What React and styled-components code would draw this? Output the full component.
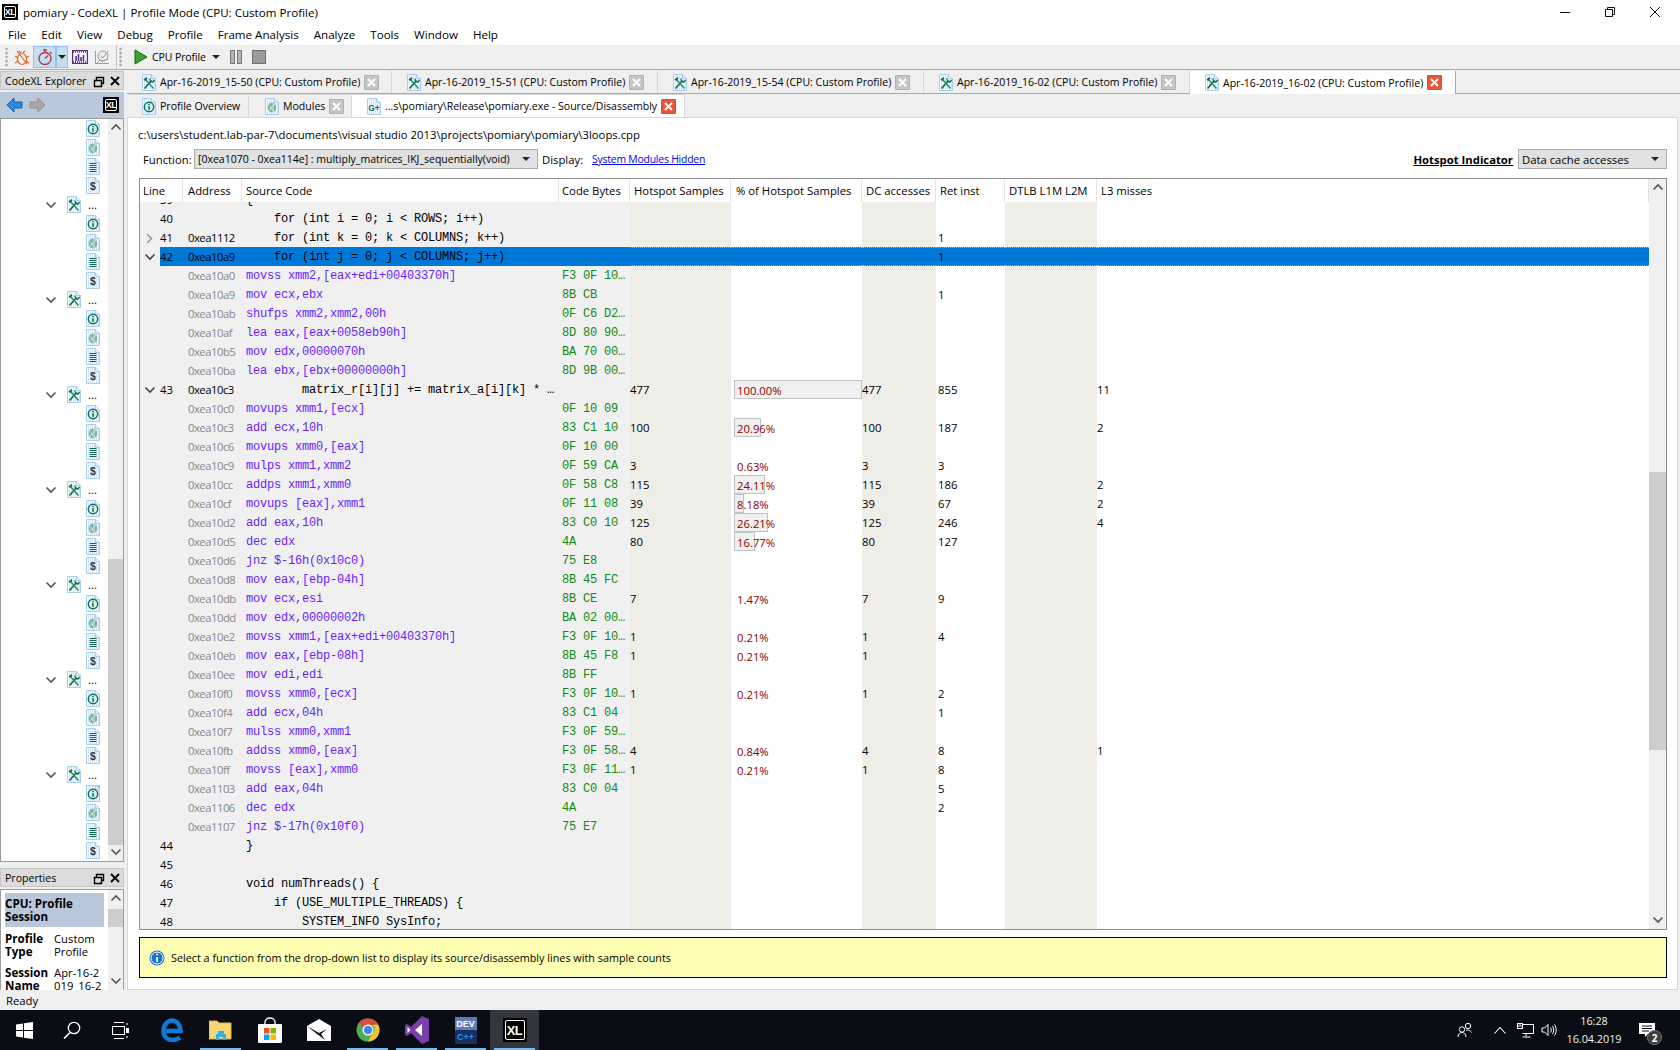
import React from 'react';
import styled, { createGlobalStyle } from 'styled-components';

const UI = '"Open Sans", "Liberation Sans", sans-serif';
const MONO = '"Liberation Mono", monospace';

const Global = createGlobalStyle`
    html, body { margin: 0; padding: 0; overflow: hidden; background: #efefef; }
    * { box-sizing: border-box; }
`;

const Page = styled.div`
    width: 1680px;
    height: 1050px;
    display: flex;
    flex-direction: column;
    font-family: ${UI};
    font-size: 11.3px;
    color: #000;
    background: #efefef;
    overflow: hidden;
`;

/* title + menu */
const TitleBar = styled.div`
    height: 24px;
    flex: none;
    background: #fff;
    display: flex;
    align-items: center;
    padding: 0 3px 0 2px;
`;
const TitleText = styled.span`
    margin-left: 5px;
    font-size: 11.6px;
    flex: 1;
`;
const WinButton = styled.div`
    width: 45px;
    height: 20px;
    display: flex;
    align-items: center;
    justify-content: center;
`;
const MenuBar = styled.div`
    height: 20px;
    flex: none;
    background: #fff;
    display: flex;
    align-items: center;
    gap: 15px;
    padding-left: 8px;
    font-size: 11.6px;
`;
const MenuItem = styled.span``;

const LogoBox = styled.div`
    width: ${({$size}) => $size}px;
    height: ${({$size}) => $size}px;
    flex: none;
    background: #000;
    display: flex;
    align-items: center;
    justify-content: center;
    padding: ${({$size}) => Math.round($size / 10)}px;
`;
const LogoInner = styled.div`
    width: 100%;
    height: 100%;
    border: 1px solid #fff;
    border-radius: 2px;
    color: #fff;
    font: bold ${({$size}) => Math.round($size * 0.56)}px "Liberation Sans", sans-serif;
    display: flex;
    align-items: center;
    justify-content: center;
    letter-spacing: -0.5px;
`;
const XLLogo = ({size}) => <LogoBox $size={size}><LogoInner $size={size}>XL</LogoInner></LogoBox>;

/* toolbar */
const Toolbar = styled.div`
    height: 26px;
    flex: none;
    display: flex;
    align-items: center;
    padding-left: 5px;
    background: #f0f0f0;
    border-top: 1px solid #fafafa;
    border-bottom: 1px solid #a9a9a9;
`;
const Grip = styled.div`
    width: 3px;
    height: 20px;
    margin: 0 2px 0 ${({$left}) => $left || 0}px;
    background-image: radial-gradient(#a8a8a8 1px, transparent 1.2px);
    background-size: 3px 4px;
`;
const ToolSep = styled.div`
    width: 1px;
    height: 24px;
    margin-left: 2px;
    background: #c4c4c4;
`;
const ToolBtn = styled.div`
    width: ${({$w}) => $w || 23}px;
    height: 22px;
    flex: none;
    margin-left: ${({$left}) => $left || 0}px;
    display: flex;
    align-items: center;
    justify-content: center;
    background: ${({$on}) => $on ? '#c4def2' : 'transparent'};
    border: 1px solid ${({$on}) => $on ? '#92c0e6' : 'transparent'};
`;
const ToolLabel = styled.span`
    width: 55px;
    margin-left: 1px;
    font-size: 10.5px;
    letter-spacing: -0.1px;
    white-space: nowrap;
`;
const Caret = styled.span`
    width: 0;
    height: 0;
    flex: none;
    border-left: 4px solid transparent;
    border-right: 4px solid transparent;
    border-top: 4px solid #222;
`;

/* workspace */
const Workspace = styled.div`
    flex: 1;
    min-height: 0;
    display: flex;
    padding-top: 1px;
`;
const Dock = styled.div`
    width: 124px;
    flex: none;
    display: flex;
    flex-direction: column;
`;
const DockHeader = styled.div`
    height: 19px;
    flex: none;
    display: flex;
    align-items: center;
    padding: 1px 2px 0 4px;
    background: #dcdcdc;
    border: 1px solid #c4c4c4;
    font-size: 10.6px;
    margin-top: ${({$top}) => $top || 0}px;
`;
const DockTitle = styled.span`
    flex: 1;
    white-space: nowrap;
`;
const NavBar = styled.div`
    height: 26px;
    flex: none;
    margin-top: 2px;
    background: #b9c8db;
    display: flex;
    align-items: center;
    padding: 0 5px 0 6px;
    gap: 6px;
`;
const NavSpacer = styled.div`flex: 1;`;
const Tree = styled.div`
    flex: 1;
    min-height: 0;
    display: flex;
    background: #fff;
    border: 1px solid #9c9c9c;
`;
const TreeList = styled.div`
    flex: 1;
    overflow: hidden;
`;
const TreeRow = styled.div`
    height: 19px;
    display: flex;
    align-items: center;
    padding-left: ${({$group}) => $group ? 44 : 85}px;
`;
const TreeGap = styled.span`
    width: 10px;
    flex: none;
`;
const TreeDots = styled.span`
    margin-left: 7px;
    font-size: 11.3px;
    line-height: 12px;
`;
const SelectedIcon = styled.span`
    display: flex;
    background: ${({$on}) => $on ? '#9fc4e6' : 'transparent'};
`;

const Scroll = styled.div`
    width: ${({$w}) => $w || 16}px;
    flex: none;
    display: flex;
    flex-direction: column;
    background: #f0f0f0;
`;
const ScrollArrow = styled.div`
    height: 18px;
    flex: none;
    display: flex;
    align-items: center;
    justify-content: center;
`;
const ScrollTrack = styled.div`
    flex: 1;
    min-height: 0;
    padding-top: ${({$top}) => $top}px;
`;
const ScrollThumb = styled.div`
    height: ${({$size}) => $size}px;
    background: #cdcdcd;
`;
const Bar = ({w, top, size}) => (
    <Scroll $w={w}>
        <ScrollArrow><Chevron dir="up" color="#555" /></ScrollArrow>
        <ScrollTrack $top={top}><ScrollThumb $size={size} /></ScrollTrack>
        <ScrollArrow><Chevron dir="down" color="#555" /></ScrollArrow>
    </Scroll>
);

/* properties */
const Props = styled.div`
    height: 101px;
    flex: none;
    margin-top: 2px;
    display: flex;
    background: #fff;
    border: 1px solid #9c9c9c;
    border-bottom: 0;
    overflow: hidden;
`;
const PropsBody = styled.div`
    flex: 1;
    padding: 3px 4px 0;
    overflow: hidden;
    line-height: 13px;
`;
const PropsHead = styled.div`
    height: 34px;
    background: #b9c7da;
    font-weight: 700;
    font-size: 11.6px;
    padding-top: 4px;
    margin-bottom: 5px;
`;
const PropsGrid = styled.div`
    display: grid;
    grid-template-columns: 49px 1fr;
    row-gap: 8px;
`;
const PropKey = styled.div`
    font-weight: 700;
    font-size: 11.6px;
`;
const PropVal = styled.div`
    word-break: break-all;
`;

/* main area */
const Main = styled.div`
    flex: 1;
    min-width: 0;
    display: flex;
    flex-direction: column;
    padding-left: 3px;
`;
const DocTabs = styled.div`
    height: 23px;
    flex: none;
    display: flex;
    border-bottom: 1px solid #a9a9a9;
`;
const DocTab = styled.div`
    width: ${({$w}) => $w}px;
    height: ${({$active}) => $active ? 23 : 22}px;
    flex: none;
    display: flex;
    align-items: center;
    padding-left: 15px;
    gap: 4px;
    font-size: 10.55px;
    white-space: nowrap;
    background: ${({$active}) => $active ? '#fff' : '#efefef'};
    border-right: 1px solid ${({$active}) => $active ? '#a9a9a9' : '#d6d6d6'};
`;
const TabText = styled.span`
    flex: 1;
`;
const CloseBox = styled.span`
    width: 15px;
    height: 15px;
    flex: none;
    margin-right: ${({$right}) => $right || 13}px;
    display: flex;
    align-items: center;
    justify-content: center;
    border-radius: 1px;
    background: ${({$hot}) => $hot ? '#e2593c' : '#c6c6c6'};
    border: 1px solid ${({$hot}) => $hot ? '#c4553e' : '#b0b0b0'};
`;
const ViewTabs = styled.div`
    height: 23px;
    flex: none;
    display: flex;
    padding-left: 2px;
`;
const ViewTab = styled.div`
    width: ${({$w}) => $w}px;
    flex: none;
    display: flex;
    align-items: center;
    gap: 4px;
    padding-left: ${({$pad}) => $pad}px;
    font-size: 10.55px;
    white-space: nowrap;
    background: ${({$active}) => $active ? '#fff' : '#efefef'};
    border: 1px solid #d8d8d8;
    border-bottom: 0;
    border-left: 0;
`;
const Panel = styled.div`
    flex: 1;
    min-height: 0;
    margin-right: 2px;
    display: flex;
    flex-direction: column;
    background: #fff;
    border: 1px solid #d8d8d8;
    padding: 0 10px 11px 10px;
`;
const PathLine = styled.div`
    height: 20px;
    margin-top: 7px;
    display: flex;
    align-items: center;
`;
const FilterRow = styled.div`
    height: 20px;
    margin-top: 5px;
    display: flex;
    align-items: center;
`;
const FilterLabel = styled.span`
    margin-left: ${({$left}) => $left}px;
    width: ${({$w}) => $w}px;
    flex: none;
`;
const Combo = styled.div`
    width: ${({$w}) => $w}px;
    height: 20px;
    flex: none;
    display: flex;
    align-items: center;
    justify-content: space-between;
    padding: 0 7px 0 3px;
    font-size: ${({$size}) => $size || 11.3}px;
    background: #e1e1e1;
    border: 1px solid #adadad;
    white-space: nowrap;
`;
const SysLink = styled.a`
    color: #0000ee;
    text-decoration: underline;
    font-size: 10.4px;
    letter-spacing: -0.2px;
`;
const Grow = styled.div`flex: 1;`;
const HotLabel = styled.span`
    font-weight: 700;
    text-decoration: underline;
    margin-right: 5px;
`;

/* table */
const COLS = '20px 23px 59px 317px 71px 101px 131px 74px 69px 92px 1fr';
const Table = styled.div`
    height: 752px;
    flex: none;
    margin: 9px 0 0 1px;
    display: flex;
    border: 1px solid #8c8c8c;
    background: #fff;
    overflow: hidden;
`;
const TableMain = styled.div`
    flex: 1;
    min-width: 0;
    display: flex;
    flex-direction: column;
`;
const HeadRow = styled.div`
    height: 23px;
    flex: none;
    display: grid;
    grid-template-columns: 43px 59px 317px 71px 101px 131px 74px 69px 92px 1fr;
    background: #fff;
`;
const HeadCell = styled.div`
    display: flex;
    align-items: center;
    padding-left: ${({$pad}) => $pad || 4}px;
    border-right: 1px solid #e4e4e4;
    white-space: nowrap;
    overflow: hidden;
`;
const Rows = styled.div`
    flex: 1;
    min-height: 0;
    overflow: hidden;
`;
const Row = styled.div`
    height: 19px;
    display: grid;
    grid-template-columns: ${COLS};
    margin-top: ${({$clip}) => $clip ? -12 : 0}px;
`;
const Cell = styled.div`
    display: flex;
    align-items: center;
    position: relative;
    white-space: pre;
    overflow: hidden;
    padding-left: ${({$pad}) => $pad || 0}px;
    background: ${({$sel, $bg}) => $sel ? '#0078d7' : $bg};
    ${({$dotted}) => $dotted && `
        border-top: 1px dotted #d1a06a;
        border-bottom: 1px dotted #d1a06a;
    `}
`;
const Addr = styled.span`
    color: ${({$dim}) => $dim ? '#888' : '#000'};
    letter-spacing: -0.5px;
`;
const Code = styled.span`
    font-family: ${MONO};
    font-size: 12px;
    letter-spacing: -0.2px;
    color: ${({$kind}) => $kind === 'asm' ? '#6a1fff' : $kind === 'bytes' ? '#108a10' : '#000'};
`;
const PctBar = styled.div`
    position: absolute;
    left: 3px;
    top: 0;
    height: 19px;
    background: #f0f0f0;
    border: 1px solid #c2c2c2;
`;
const PctText = styled.span`
    position: relative;
    color: #8b0000;
    padding-left: 6px;
    padding-top: 2px;
`;

const Notice = styled.div`
    height: 41px;
    flex: none;
    margin: 7px 0 0 1px;
    display: flex;
    align-items: center;
    gap: 6px;
    padding-left: 9px;
    font-size: 10.8px;
    background: #ffffb4;
    border: 1px solid #000;
`;

const StatusBar = styled.div`
    height: 20px;
    flex: none;
    display: flex;
    align-items: center;
    padding-left: 6px;
    background: #efefef;
`;

/* taskbar */
const Taskbar = styled.div`
    height: 40px;
    flex: none;
    display: flex;
    align-items: center;
    background: #0a0d13;
    color: #fff;
`;
const TaskBtn = styled.div`
    width: ${({$w}) => $w || 49}px;
    height: 40px;
    flex: none;
    position: relative;
    display: flex;
    align-items: center;
    justify-content: center;
    background: ${({$active}) => $active ? '#33363c' : 'transparent'};
    margin-left: ${({$left}) => $left || 0}px;
    margin-right: ${({$right}) => $right || 0}px;
    ${({$open}) => $open && `
        &:after {
            content: "";
            position: absolute;
            left: 4px;
            right: 4px;
            bottom: 0;
            height: 2px;
            background: #76b9ed;
        }
    `}
`;
const TrayIcon = styled.div`
    width: ${({$w}) => $w}px;
    height: 40px;
    flex: none;
    display: flex;
    align-items: center;
    justify-content: center;
    margin-left: ${({$left}) => $left || 0}px;
`;
const Clock = styled.div`
    width: 66px;
    flex: none;
    text-align: center;
    font-size: 10.8px;
    line-height: 18px;
    margin-left: 2px;
    color: #f2f2f2;
`;
const Badge = styled.span`
    position: absolute;
    right: 7px;
    bottom: 5px;
    width: 15px;
    height: 15px;
    border-radius: 50%;
    background: #3b3b3b;
    border: 1px solid #777;
    color: #fff;
    font-size: 10px;
    font-weight: 700;
    display: flex;
    align-items: center;
    justify-content: center;
`;
const DevBox = styled.div`
    width: 22px;
    height: 27px;
    background: linear-gradient(#5a7db8 50%, #17305f 50%);
    font: bold 9px "Liberation Sans", sans-serif;
    color: #fff;
    text-align: center;
    line-height: 11px;
    padding-top: 2px;
`;
const DevPlus = styled.div`
    color: #2f8cff;
    margin-top: 2px;
`;

/* little drawings */
function Chevron({dir, color}) {
    const d = {
        up: 'M1.5 6.5 6 2l4.5 4.5',
        down: 'M1.5 2.5 6 7l4.5-4.5',
        right: 'M3 1l4.500 4.500L3 10',
    }[dir];
    return (
        <svg width="12" height="10" viewBox="0 0 12 10" fill="none">
            <path d={d} stroke={color} strokeWidth="1.6" />
        </svg>
    );
}

const PageSvg = styled.svg`
    flex: none;
`;

function DocIcon({kind}) {
    return (
        <PageSvg width="14" height="17" viewBox="0 0 14 17">
            <path d="M.5.5h9l4 4v12H.5z" fill="#f7fbff" stroke="#a9cdee" />
            <path d="M2.500 1v15M4.500 1v15M6.500 1v15M8.500 1v15M10.500 4v12M12.500 5v11" stroke="#d3e6f7" />
            <path d="M9.500.5v4h4" fill="#e3f0fb" stroke="#a9cdee" />
            {kind === 'tool' && <>
                <path d="M2.500 14.500 9.500 6.500" stroke="#0c6b4f" strokeWidth="1.700" />
                <path d="M8 4.500a3 3 0 0 0 3 3.500l1.500-2" stroke="#0c6b4f" strokeWidth="1.300" fill="none" />
                <path d="M3 5l8.500 9.500" stroke="#1f8f78" strokeWidth="1.500" />
                <path d="M1.500 5.500 4.500 3l1 1.500-2.500 2.500z" fill="#0c6b4f" />
            </>}
            {kind === 'info' && <>
                <circle cx="7" cy="9" r="4.700" fill="#d5f2e8" stroke="#0b6b5f" strokeWidth="1.400" />
                <path d="M7 8.200v3.600M7 6v1.200" stroke="#0b5f55" strokeWidth="1.500" />
            </>}
            {kind === 'mod' && <>
                <ellipse cx="7" cy="9.500" rx="4.300" ry="5" fill="#7fb5a3" />
                <path d="M4 12l6-6M4.500 7.500l4 6M8 5v9" stroke="#dcefe8" strokeWidth=".8" />
            </>}
            {kind === 'list' && <path d="M3.500 5.500h7M3.500 7.500h7M3.500 9.500h7M3.500 11.500h7M3.500 13.500h7" stroke="#12664f" strokeWidth="1.100" />}
            {kind === 'dollar' && <text x="7" y="13" textAnchor="middle" fontSize="10.500" fontWeight="700" fontFamily="Liberation Sans" fill="#1c3f4f">$</text>}
            {kind === 'cpp' && <text x="7" y="12.500" textAnchor="middle" fontSize="8.500" fontWeight="700" fontFamily="Liberation Sans" fill="#0b6b5f">G+</text>}
        </PageSvg>
    );
}

const CloseX = () => (
    <svg width="9" height="9" viewBox="0 0 9 9">
        <path d="M1 1l7 7M8 1 1 8" stroke="#fff" strokeWidth="2" />
    </svg>
);

const DockGlyphs = () => (
    <svg width="30" height="13" viewBox="0 0 30 13" fill="none" stroke="#000">
        <path d="M3.500 5.500h7v6h-7zM5.500 5V2.500h7v6H11" strokeWidth="1.400" />
        <path d="M20 2l8 8M28 2l-8 8" strokeWidth="1.800" />
    </svg>
);

const ArrowLeft = () => (
    <svg width="17" height="16" viewBox="0 0 17 16">
        <path d="M1 8l7-7v4h8v6H8v4z" fill="#2a8be6" stroke="#1f5fa8" />
    </svg>
);
const ArrowRight = () => (
    <svg width="17" height="16" viewBox="0 0 17 16">
        <path d="M16 8 9 1v4H1v6h8v4z" fill="#a9a9a9" stroke="#8f8f8f" />
    </svg>
);

const WinGlyph = ({kind}) => (
    <svg width="12" height="12" viewBox="0 0 12 12" fill="none" stroke="#111">
        {kind === 'min' && <path d="M1 6.500h10" />}
        {kind === 'max' && <path d="M1.500 3.500h7v7h-7zM3.500 3V1.500h7v7H9" />}
        {kind === 'close' && <path d="M1 1l10 10M11 1 1 11" />}
    </svg>
);

const BugIcon = () => (
    <svg width="16" height="17" viewBox="0 0 16 17" fill="none" stroke="#e2622a" strokeWidth="1.200">
        <ellipse cx="8" cy="10" rx="4.500" ry="5.500" />
        <path d="M3 2l10 13M1 7l3 2M15 7l-3 2M1 14l3-2M15 14l-3-2M5 2l2 2M11 2 9 4" />
    </svg>
);
const WatchIcon = () => (
    <svg width="16" height="18" viewBox="0 0 16 18" fill="none" stroke="#b83a46" strokeWidth="1.400">
        <circle cx="8" cy="10.500" r="6" />
        <path d="M6 2h4M8 2v2.500M8 10.500l3-3M13 4l1.500 1.500" />
    </svg>
);
const BarsIcon = () => (
    <svg width="16" height="14" viewBox="0 0 16 14">
        <rect x=".5" y=".5" width="15" height="13" fill="#fff" stroke="#5b2a86" strokeWidth="1.400" />
        <path d="M1 2h14M1 12h14" stroke="#7a4da3" strokeDasharray="1 1" strokeWidth="2" />
        <path d="M4 11V6M6.500 11V4M9 11V7M11.500 11V5" stroke="#5b2a86" strokeWidth="1.600" />
    </svg>
);
const PieIcon = () => (
    <svg width="17" height="16" viewBox="0 0 17 16" fill="none" stroke="#9a9a9a">
        <path d="M1.500 2v12.500H15" />
        <circle cx="9" cy="7" r="5" fill="#ececec" />
        <path d="M7 7l2 2 5-7M3 14l3-3 3 1 5-2" />
    </svg>
);
const PlayIcon = () => (
    <svg width="14" height="16" viewBox="0 0 14 16">
        <path d="M1 1l12 7-12 7z" fill="#39a435" stroke="#17651a" />
    </svg>
);
const PauseIcon = () => (
    <svg width="12" height="14" viewBox="0 0 12 14">
        <rect x=".5" y=".5" width="4" height="13" fill="#b4b4b4" stroke="#777" />
        <rect x="7.500" y=".5" width="4" height="13" fill="#b4b4b4" stroke="#777" />
    </svg>
);
const StopIcon = () => (
    <svg width="14" height="14" viewBox="0 0 14 14">
        <rect x=".5" y=".5" width="13" height="13" fill="#9b9b9b" stroke="#6f6f6f" />
    </svg>
);

const InfoDisc = () => (
    <svg width="16" height="16" viewBox="0 0 16 16">
        <circle cx="8" cy="8" r="7.500" fill="#1a74d2" />
        <circle cx="8" cy="8" r="6" fill="none" stroke="#fff" />
        <path d="M8 7v5M8 3.700v1.600" stroke="#fff" strokeWidth="1.800" />
    </svg>
);

const WindowsIcon = () => (
    <svg width="17" height="17" viewBox="0 0 17 17" fill="#fff">
        <path d="M0 2.400 7 1.400V8H0zM8 1.300 17 0v8H8zM0 9h7v6.600l-7-1zM8 9h9v8l-9-1.300z" />
    </svg>
);
const SearchIcon = () => (
    <svg width="18" height="18" viewBox="0 0 18 18" fill="none" stroke="#fff" strokeWidth="1.300">
        <circle cx="11" cy="7" r="5.700" />
        <path d="M7 11.500 1 17.500" strokeWidth="1.600" />
    </svg>
);
const TaskViewIcon = () => (
    <svg width="17" height="17" viewBox="0 0 17 17" fill="none" stroke="#fff" strokeWidth="1.100">
        <path d="M2 .5h10M2 16.500h10M.5 4.500h12v8H.5zM15 1v2M15 14v2" />
        <rect x="14" y="6" width="3" height="5" fill="#fff" stroke="none" />
    </svg>
);
const EdgeIcon = () => (
    <svg width="22" height="24" viewBox="0 0 22 24" fill="none">
        <path d="M5 13h14.500c0-6.500-4-10.500-8.500-10.500S2.500 7 2.500 13s4 9 9 9c3 0 5-.8 7.500-2.300" stroke="#0f7ad8" strokeWidth="4.400" />
    </svg>
);
const FolderIcon = () => (
    <svg width="23" height="21" viewBox="0 0 23 21">
        <path d="M0 1h8l2 2h12v16H0z" fill="#f6d675" stroke="#e0b64c" />
        <path d="M7 20v-6h2v-3h6v3h2v6h-3v-3H10v3z" fill="#38aee8" />
    </svg>
);
const StoreIcon = () => (
    <svg width="24" height="26" viewBox="0 0 24 26">
        <path d="M7 8V5a5 4 0 0 1 10 0v3" fill="none" stroke="#fff" strokeWidth="1.300" />
        <rect x="0" y="7" width="24" height="19" rx="1" fill="#fff" />
        <rect x="6" y="11" width="5.500" height="5.500" fill="#f25022" />
        <rect x="12.500" y="11" width="5.500" height="5.500" fill="#7fba00" />
        <rect x="6" y="17.500" width="5.500" height="5.500" fill="#00a4ef" />
        <rect x="12.500" y="17.500" width="5.500" height="5.500" fill="#ffb900" />
    </svg>
);
const MailIcon = () => (
    <svg width="24" height="22" viewBox="0 0 24 22">
        <path d="M0 7 12 0l12 7v15H0z" fill="#fff" />
        <path d="M0 7l12 7 8-4-6 5 4 6L10 15z" fill="#0a0d13" />
    </svg>
);
const ChromeIcon = () => (
    <svg width="24" height="24" viewBox="0 0 24 24">
        <circle cx="12" cy="12" r="11.500" fill="#4caf50" />
        <path d="M12 .5a11.500 11.500 0 0 1 10.200 6.200H12a5.300 5.300 0 0 0-5 3.500L3 4.600A11.500 11.500 0 0 1 12 .5z" fill="#e04a3f" />
        <path d="M22.200 6.700A11.500 11.500 0 0 1 12 23.500l4.600-8.300a5.300 5.300 0 0 0 .1-8.500z" fill="#fbc02d" />
        <circle cx="12" cy="12" r="5.500" fill="#fff" />
        <circle cx="12" cy="12" r="4.300" fill="#4285f4" />
    </svg>
);
const VSIcon = () => (
    <svg width="24" height="28" viewBox="0 0 24 28">
        <path d="M17 0l7 3v22l-7 3L6 17l-4 3-2-1V9l2-1 4 3z" fill="#7b3fa8" />
        <path d="M17 8v12l-7-6zM2.500 11v6l3-3z" fill="#fff" />
    </svg>
);

const PeopleIcon = () => (
    <svg width="16" height="16" viewBox="0 0 16 16" fill="none" stroke="#fff">
        <circle cx="11" cy="4" r="2.700" />
        <circle cx="5" cy="7.500" r="2.700" />
        <path d="M1 15c0-3 2-4.500 4-4.500S9 12 9 15M9 8.500c1-.8 4-.8 5.500 2" />
    </svg>
);
const UpIcon = () => (
    <svg width="12" height="8" viewBox="0 0 12 8" fill="none" stroke="#fff" strokeWidth="1.100">
        <path d="M.5 7.500 6 1.500l5.500 6" />
    </svg>
);
const NetIcon = () => (
    <svg width="17" height="15" viewBox="0 0 17 15" fill="none" stroke="#fff">
        <path d="M3.500 1.500h13v9h-11M9 10.500v3M5.500 14h8" />
        <rect x=".5" y=".5" width="5" height="5" fill="#0a0d13" />
        <path d="M1 3h4M3 1v1" />
    </svg>
);
const SoundIcon = () => (
    <svg width="16" height="14" viewBox="0 0 16 14" fill="none" stroke="#fff">
        <path d="M1 5h2.500L7 1.500v11L3.500 9H1zM9.500 4.500c1 1.500 1 3.500 0 5M11.500 3c1.600 2.300 1.600 5.700 0 8M13.500 1.500c2.200 3.200 2.200 7.800 0 11" />
    </svg>
);
const NotifyIcon = () => (
    <svg width="16" height="14" viewBox="0 0 16 14">
        <path d="M0 0h16v11H9l-3 3v-3H0z" fill="#fff" />
        <path d="M3 3h10M3 5.500h10M3 8h7" stroke="#0a0d13" />
    </svg>
);

/* data */
const asm = (addr, code, bytes, vals) => ({addr, code, bytes, vals, kind: 'asm'});
const src = (line, addr, code, vals, chev) => ({line, addr, code, vals, chev, kind: 'src'});

const rows = [
    src(39, '', '{'),
    src(40, '', '    for (int i = 0; i < ROWS; i++)'),
    src(41, '0xea1112', '    for (int k = 0; k < COLUMNS; k++)', {ret: 1}, 'right'),
    {...src(42, '0xea10a9', '    for (int j = 0; j < COLUMNS; j++)', {ret: 1}, 'down'), sel: true},
    asm('0xea10a0', 'movss xmm2,[eax+edi+00403370h]', 'F3 0F 10…'),
    asm('0xea10a9', 'mov ecx,ebx', '8B CB', {ret: 1}),
    asm('0xea10ab', 'shufps xmm2,xmm2,00h', '0F C6 D2…'),
    asm('0xea10af', 'lea eax,[eax+0058eb90h]', '8D 80 90…'),
    asm('0xea10b5', 'mov edx,00000070h', 'BA 70 00…'),
    asm('0xea10ba', 'lea ebx,[ebx+00000000h]', '8D 9B 00…'),
    src(43, '0xea10c3', '        matrix_r[i][j] += matrix_a[i][k] * …', {hot: 477, pct: 100, dc: 477, ret: 855, l3: 11}, 'down'),
    asm('0xea10c0', 'movups xmm1,[ecx]', '0F 10 09'),
    asm('0xea10c3', 'add ecx,10h', '83 C1 10', {hot: 100, pct: 20.96, dc: 100, ret: 187, l3: 2}),
    asm('0xea10c6', 'movups xmm0,[eax]', '0F 10 00'),
    asm('0xea10c9', 'mulps xmm1,xmm2', '0F 59 CA', {hot: 3, pct: 0.63, dc: 3, ret: 3}),
    asm('0xea10cc', 'addps xmm1,xmm0', '0F 58 C8', {hot: 115, pct: 24.11, dc: 115, ret: 186, l3: 2}),
    asm('0xea10cf', 'movups [eax],xmm1', '0F 11 08', {hot: 39, pct: 8.18, dc: 39, ret: 67, l3: 2}),
    asm('0xea10d2', 'add eax,10h', '83 C0 10', {hot: 125, pct: 26.21, dc: 125, ret: 246, l3: 4}),
    asm('0xea10d5', 'dec edx', '4A', {hot: 80, pct: 16.77, dc: 80, ret: 127}),
    asm('0xea10d6', 'jnz $-16h(0x10c0)', '75 E8'),
    asm('0xea10d8', 'mov eax,[ebp-04h]', '8B 45 FC'),
    asm('0xea10db', 'mov ecx,esi', '8B CE', {hot: 7, pct: 1.47, dc: 7, ret: 9}),
    asm('0xea10dd', 'mov edx,00000002h', 'BA 02 00…'),
    asm('0xea10e2', 'movss xmm1,[eax+edi+00403370h]', 'F3 0F 10…', {hot: 1, pct: 0.21, dc: 1, ret: 4}),
    asm('0xea10eb', 'mov eax,[ebp-08h]', '8B 45 F8', {hot: 1, pct: 0.21, dc: 1}),
    asm('0xea10ee', 'mov edi,edi', '8B FF'),
    asm('0xea10f0', 'movss xmm0,[ecx]', 'F3 0F 10…', {hot: 1, pct: 0.21, dc: 1, ret: 2}),
    asm('0xea10f4', 'add ecx,04h', '83 C1 04', {ret: 1}),
    asm('0xea10f7', 'mulss xmm0,xmm1', 'F3 0F 59…'),
    asm('0xea10fb', 'addss xmm0,[eax]', 'F3 0F 58…', {hot: 4, pct: 0.84, dc: 4, ret: 8, l3: 1}),
    asm('0xea10ff', 'movss [eax],xmm0', 'F3 0F 11…', {hot: 1, pct: 0.21, dc: 1, ret: 8}),
    asm('0xea1103', 'add eax,04h', '83 C0 04', {ret: 5}),
    asm('0xea1106', 'dec edx', '4A', {ret: 2}),
    asm('0xea1107', 'jnz $-17h(0x10f0)', '75 E7'),
    src(44, '', '}'),
    src(45, '', ''),
    src(46, '', 'void numThreads() {'),
    src(47, '', '    if (USE_MULTIPLE_THREADS) {'),
    src(48, '', '        SYSTEM_INFO SysInfo;'),
    src('', '', ''),
];

const GREY = '#f0f0f0';
const TINT = '#eeede6';
const WHITE = '#fff';

const headers = [
    ['Line', 3], ['Address', 5], ['Source Code', 4], ['Code Bytes', 3], ['Hotspot Samples', 4],
    ['% of Hotspot Samples', 5], ['DC accesses', 4], ['Ret inst', 4], ['DTLB L1M L2M', 4], ['L3 misses', 4],
];

function SourceRow({row, clip}) {
    const {line, addr, code, bytes, vals = {}, kind, chev, sel} = row;
    return (
        <Row $clip={clip}>
            <Cell $bg={GREY} $pad={4}>
                {chev && <Chevron dir={chev} color={chev === 'right' ? '#999' : '#444'} />}
            </Cell>
            <Cell $bg={GREY} $sel={sel}>{line}</Cell>
            <Cell $bg={GREY} $sel={sel} $pad={5}><Addr $dim={kind === 'asm'}>{addr}</Addr></Cell>
            <Cell $bg={GREY} $sel={sel} $pad={4}><Code $kind={kind === 'asm' ? 'asm' : 'src'}>{code}</Code></Cell>
            <Cell $bg={GREY} $sel={sel} $pad={3}>{bytes && <Code $kind="bytes">{bytes}</Code>}</Cell>
            <Cell $bg={TINT} $sel={sel} $dotted={sel}>{vals.hot}</Cell>
            <Cell $bg={WHITE} $sel={sel} $dotted={sel}>
                {vals.pct !== undefined && vals.pct >= 2 && <PctBar style={{width: `${vals.pct * 1.28}px`}} />}
                {vals.pct !== undefined && <PctText>{vals.pct.toFixed(2)}%</PctText>}
            </Cell>
            <Cell $bg={TINT} $sel={sel} $dotted={sel}>{vals.dc}</Cell>
            <Cell $bg={WHITE} $sel={sel} $dotted={sel} $pad={2}>{vals.ret}</Cell>
            <Cell $bg={TINT} $sel={sel} $dotted={sel} />
            <Cell $bg={WHITE} $sel={sel} $dotted={sel}>{vals.l3}</Cell>
        </Row>
    );
}

const treeGroups = 7;
const treeRows = [];
['info', 'mod', 'list', 'dollar'].forEach(k => treeRows.push({kind: k}));
for (let g = 0; g < treeGroups; g++) {
    treeRows.push({kind: 'tool', group: true});
    ['info', 'mod', 'list', 'dollar'].forEach(k => treeRows.push({kind: k, on: g === treeGroups - 1 && k === 'info'}));
}

const sessions = ['15-50', '15-51', '15-54', '16-02', '16-02'];

export default function App() {
    return (
        <Page>
            <Global />
            <TitleBar>
                <XLLogo size={16} />
                <TitleText>pomiary - CodeXL | Profile Mode (CPU: Custom Profile)</TitleText>
                <WinButton><WinGlyph kind="min" /></WinButton>
                <WinButton><WinGlyph kind="max" /></WinButton>
                <WinButton><WinGlyph kind="close" /></WinButton>
            </TitleBar>
            <MenuBar>
                {['File', 'Edit', 'View', 'Debug', 'Profile', 'Frame Analysis', 'Analyze', 'Tools', 'Window', 'Help'].map(m => (
                    <MenuItem key={m}>{m}</MenuItem>
                ))}
            </MenuBar>
            <Toolbar>
                <Grip />
                <ToolBtn><BugIcon /></ToolBtn>
                <ToolBtn $on><WatchIcon /></ToolBtn>
                <ToolBtn $on $w={12}><Caret /></ToolBtn>
                <ToolBtn><BarsIcon /></ToolBtn>
                <ToolBtn><PieIcon /></ToolBtn>
                <ToolSep />
                <Grip $left={2} />
                <ToolBtn $w={21} $left={6}><PlayIcon /></ToolBtn>
                <ToolLabel>CPU Profile</ToolLabel>
                <ToolBtn $w={17}><Caret /></ToolBtn>
                <ToolBtn><PauseIcon /></ToolBtn>
                <ToolBtn><StopIcon /></ToolBtn>
            </Toolbar>
            <Workspace>
                <Dock>
                    <DockHeader>
                        <DockTitle>CodeXL Explorer</DockTitle>
                        <DockGlyphs />
                    </DockHeader>
                    <NavBar>
                        <ArrowLeft />
                        <ArrowRight />
                        <NavSpacer />
                        <XLLogo size={16} />
                    </NavBar>
                    <Tree>
                        <TreeList>
                            {treeRows.map((r, i) => (
                                <TreeRow key={i} $group={r.group}>
                                    {r.group && <><Chevron dir="down" color="#555" /><TreeGap /></>}
                                    <SelectedIcon $on={r.on}><DocIcon kind={r.kind} /></SelectedIcon>
                                    {r.group && <TreeDots>...</TreeDots>}
                                </TreeRow>
                            ))}
                        </TreeList>
                        <Bar w={15} top={422} size={286} />
                    </Tree>
                    <DockHeader $top={6}>
                        <DockTitle>Properties</DockTitle>
                        <DockGlyphs />
                    </DockHeader>
                    <Props>
                        <PropsBody>
                            <PropsHead>CPU: Profile<br />Session</PropsHead>
                            <PropsGrid>
                                <PropKey>Profile<br />Type</PropKey>
                                <PropVal>Custom<br />Profile</PropVal>
                                <PropKey>Session<br />Name</PropKey>
                                <PropVal>Apr-16-2<br />019_16-2</PropVal>
                            </PropsGrid>
                        </PropsBody>
                        <Bar w={15} top={1} size={18} />
                    </Props>
                </Dock>
                <Main>
                    <DocTabs>
                        {sessions.map((s, i) => (
                            <DocTab key={i} $w={i === 0 ? 265 : 266} $active={i === 4}>
                                <DocIcon kind="tool" />
                                <TabText>Apr-16-2019_{s} (CPU: Custom Profile)</TabText>
                                <CloseBox $hot={i === 4}><CloseX /></CloseBox>
                            </DocTab>
                        ))}
                    </DocTabs>
                    <ViewTabs>
                        <ViewTab $w={120} $pad={13}><DocIcon kind="info" />Profile Overview</ViewTab>
                        <ViewTab $w={103} $pad={16}>
                            <DocIcon kind="mod" />
                            <TabText>Modules</TabText>
                            <CloseBox $right={12}><CloseX /></CloseBox>
                        </ViewTab>
                        <ViewTab $w={333} $pad={15} $active>
                            <DocIcon kind="cpp" />
                            <TabText>…s\pomiary\Release\pomiary.exe - Source/Disassembly</TabText>
                            <CloseBox $hot $right={12}><CloseX /></CloseBox>
                        </ViewTab>
                    </ViewTabs>
                    <Panel>
                        <PathLine>c:\users\student.lab-par-7\documents\visual studio 2013\projects\pomiary\pomiary\3loops.cpp</PathLine>
                        <FilterRow>
                            <FilterLabel $left={5} $w={51}>Function:</FilterLabel>
                            <Combo $w={344} $size={10.5}>[0xea1070 - 0xea114e] : multiply_matrices_IKJ_sequentially(void)<Caret /></Combo>
                            <FilterLabel $left={4} $w={50}>Display:</FilterLabel>
                            <SysLink>System Modules Hidden</SysLink>
                            <Grow />
                            <HotLabel>Hotspot Indicator</HotLabel>
                            <Combo $w={149}>Data cache accesses<Caret /></Combo>
                        </FilterRow>
                        <Table>
                            <TableMain>
                                <HeadRow>
                                    {headers.map(([h, pad]) => <HeadCell key={h} $pad={pad}>{h}</HeadCell>)}
                                </HeadRow>
                                <Rows>
                                    {rows.map((r, i) => <SourceRow key={i} row={r} clip={i === 0} />)}
                                </Rows>
                            </TableMain>
                            <Bar w={17} top={275} size={278} />
                        </Table>
                        <Notice>
                            <InfoDisc />
                            Select a function from the drop-down list to display its source/disassembly lines with sample counts
                        </Notice>
                    </Panel>
                </Main>
            </Workspace>
            <StatusBar>Ready</StatusBar>
            <Taskbar>
                <TaskBtn $w={48}><WindowsIcon /></TaskBtn>
                <TaskBtn $w={48}><SearchIcon /></TaskBtn>
                <TaskBtn $w={48}><TaskViewIcon /></TaskBtn>
                <TaskBtn $left={3}><EdgeIcon /></TaskBtn>
                <TaskBtn $open><FolderIcon /></TaskBtn>
                <TaskBtn><StoreIcon /></TaskBtn>
                <TaskBtn><MailIcon /></TaskBtn>
                <TaskBtn $open><ChromeIcon /></TaskBtn>
                <TaskBtn $open><VSIcon /></TaskBtn>
                <TaskBtn $open><DevBox>DEV<DevPlus>C++</DevPlus></DevBox></TaskBtn>
                <TaskBtn $open $active><XLLogo size={24} /></TaskBtn>
                <Grow />
                <TrayIcon $w={30}><PeopleIcon /></TrayIcon>
                <TrayIcon $w={24} $left={8}><UpIcon /></TrayIcon>
                <TrayIcon $w={22} $left={2}><NetIcon /></TrayIcon>
                <TrayIcon $w={20} $left={3}><SoundIcon /></TrayIcon>
                <Clock>16:28<br />16.04.2019</Clock>
                <TaskBtn $w={44} $left={-2} $right={11}><NotifyIcon /><Badge>2</Badge></TaskBtn>
            </Taskbar>
        </Page>
    );
}
